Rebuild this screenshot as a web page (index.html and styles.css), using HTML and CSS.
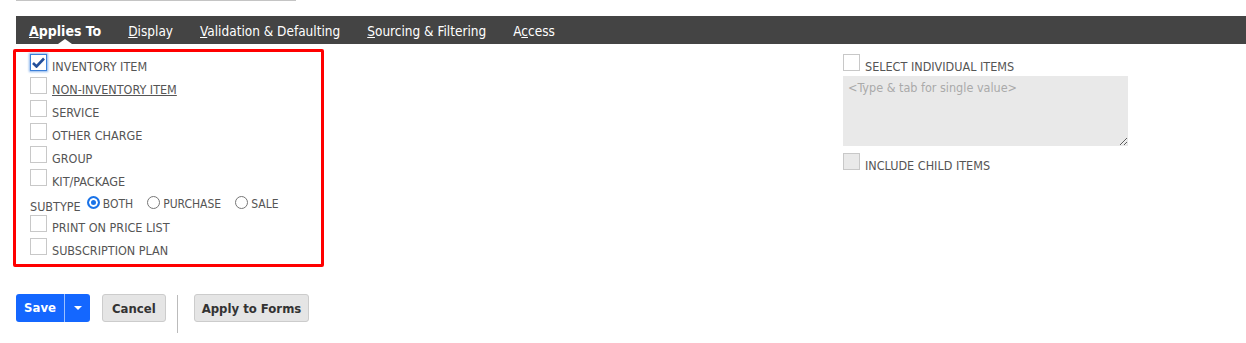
FILE: index.html
```html
<!DOCTYPE html>
<html lang="en">
  <head>
    <meta charset="UTF-8" />
    <meta name="viewport" content="width=device-width, initial-scale=1.0" />
    <title>Custom Item Field</title>
    <link rel="stylesheet" href="styles.css">
  </head>
  <body>
    <div class="topLine"></div>

    <!-- Subtab bar -->
    <div class="tabBar">
      <span class="tab active"><u>A</u>pplies To</span>
      <span class="tab"><u>D</u>isplay</span>
      <span class="tab"><u>V</u>alidation &amp; Defaulting</span>
      <span class="tab"><u>S</u>ourcing &amp; Filtering</span>
      <span class="tab">A<u>c</u>cess</span>
    </div>

    <div class="content">
      <div class="appliesBox">
        <div class="row">
          <span class="cb checked">
            <svg width="13" height="11" viewBox="0 0 13 11">
              <path d="M1 6 L4.5 9.5 L12 1.5" fill="none" stroke="#24509b" stroke-width="2.6" />
            </svg>
          </span>
          <span class="label">INVENTORY ITEM</span>
        </div>
        <div class="row">
          <span class="cb"></span>
          <span class="label link">NON-INVENTORY ITEM</span>
        </div>
        <div class="row">
          <span class="cb"></span>
          <span class="label">SERVICE</span>
        </div>
        <div class="row">
          <span class="cb"></span>
          <span class="label">OTHER CHARGE</span>
        </div>
        <div class="row">
          <span class="cb"></span>
          <span class="label">GROUP</span>
        </div>
        <div class="row">
          <span class="cb"></span>
          <span class="label">KIT/PACKAGE</span>
        </div>
        <div class="row subtype">
          <span class="subLabel">SUBTYPE</span>
          <span class="radio on"></span>
          <span class="radioLabel">BOTH</span>
          <span class="radio"></span>
          <span class="radioLabel">PURCHASE</span>
          <span class="radio"></span>
          <span class="radioLabel">SALE</span>
        </div>
        <div class="row">
          <span class="cb"></span>
          <span class="label">PRINT ON PRICE LIST</span>
        </div>
        <div class="row">
          <span class="cb"></span>
          <span class="label">SUBSCRIPTION PLAN</span>
        </div>
      </div>

      <div class="rightCol">
        <div class="row">
          <span class="cb"></span>
          <span class="label">SELECT INDIVIDUAL ITEMS</span>
        </div>
        <textarea class="items" placeholder="<Type & tab for single value>"></textarea>
        <div class="row">
          <span class="cb disabled"></span>
          <span class="label">INCLUDE CHILD ITEMS</span>
        </div>
      </div>
    </div>

    <div class="buttons">
      <div class="saveBtn">
        <span class="saveMain">Save</span>
        <span class="saveMenu"><span class="caret"></span></span>
      </div>
      <button type="button" class="btn">Cancel</button>
      <span class="sep"></span>
      <button type="button" class="btn wide">Apply to Forms</button>
    </div>
  </body>
</html>
```

FILE: styles.css
```css
/* base */
body {
  margin: 0;
  font-family: "DejaVu Sans Condensed", "DejaVu Sans", sans-serif;
  color: #555;
  background: #fff;
}

.topLine {
  width: 280px;
  margin-left: 16px;
  border-top: 1px solid #c4c4c4;
}

/* subtab bar */
.tabBar {
  display: flex;
  gap: 27px;
  height: 28px;
  margin: 15px 0 0 16px;
  padding-left: 13px;
  background-color: #444;
  font-size: 13.5px;
  line-height: 30px;
  color: #fff;
}

.tab {
  position: relative;
  white-space: nowrap;
}

.tab.active {
  font-size: 14px;
  font-weight: bold;
}

/* little arrow under the active tab */
.tab.active::after {
  content: "";
  position: absolute;
  left: 50%;
  bottom: 0;
  margin-left: -7px;
  border-left: 7px solid transparent;
  border-right: 7px solid transparent;
  border-bottom: 5px solid #fff;
}

/* field area */
.content {
  display: flex;
  margin-top: 5px;
}

.appliesBox {
  width: 291px;
  margin-left: 13px;
  padding: 1px 0 4px 14px;
  border: 3px solid #ff0000;
  border-radius: 2px;
}

.rightCol {
  margin-left: 519px;
  padding-top: 4px;
  display: flex;
  flex-direction: column;
}

.row {
  display: flex;
  align-items: flex-start;
  height: 23px;
  font-size: 12.5px;
}

.cb {
  box-sizing: border-box;
  width: 17px;
  height: 17px;
  margin-top: 1px;
  border: 1px solid #c8c8c8;
  background: #fff;
}

.cb.checked {
  border-color: #3b7fd9;
  box-shadow: 0 0 2px 1px #8db6ec;
  padding: 2px 0 0 1px;
}

.cb.checked svg {
  display: block;
}

.cb.disabled {
  background: #e9e9e9;
}

.label {
  margin-left: 5px;
  padding-top: 7px;
  line-height: 14px;
  white-space: nowrap;
}

.link {
  text-decoration: underline;
}

/* subtype radios */
.subLabel {
  padding-top: 9px;
  line-height: 14px;
}

.radioLabel {
  padding-top: 6px;
  line-height: 14px;
  margin-left: 3px;
  margin-right: 14px;
  font-size: 12px;
}

.radio {
  box-sizing: border-box;
  width: 13px;
  height: 13px;
  margin-top: 5px;
  border: 1px solid #767676;
  border-radius: 50%;
  background: #fff;
}

.subLabel + .radio {
  margin-left: 6px;
}

.radio.on {
  border: 2px solid #1a73e8;
  background: #1a73e8;
  box-shadow: inset 0 0 0 2px #fff;
}

.items {
  box-sizing: border-box;
  width: 285px;
  height: 70px;
  margin: 0 0 6px 0;
  padding: 4px 5px;
  border: none;
  background-color: #e9e9e9;
  font-family: "DejaVu Sans Condensed", "DejaVu Sans", sans-serif;
  font-size: 12.5px;
  color: #555;
  resize: both;
}

.items::placeholder {
  color: #aaa;
}

/* bottom buttons */
.buttons {
  display: flex;
  align-items: flex-start;
  margin: 27px 0 0 16px;
}

.saveBtn {
  display: flex;
  height: 28px;
  border-radius: 3px;
  background-color: #1467ff;
  color: #fff;
  font-size: 13px;
  font-weight: bold;
  line-height: 28px;
}

.saveMain {
  width: 48px;
  text-align: center;
  border-right: 1px solid #9cc0ff;
}

.saveMenu {
  width: 25px;
  display: flex;
  align-items: center;
  justify-content: center;
}

.caret {
  border-left: 4px solid transparent;
  border-right: 4px solid transparent;
  border-top: 4px solid #fff;
}

.btn {
  height: 28px;
  margin-left: 12px;
  padding: 0 9px;
  border: 1px solid #ccc;
  border-radius: 3px;
  background-color: #e5e5e5;
  font-family: "DejaVu Sans Condensed", "DejaVu Sans", sans-serif;
  font-size: 13px;
  font-weight: bold;
  color: #333;
}

.btn.wide {
  margin-left: 0;
  padding: 0 7px;
}

.sep {
  width: 1px;
  height: 38px;
  margin: 1px 16px 0 11px;
  background-color: #bbb;
}
```
